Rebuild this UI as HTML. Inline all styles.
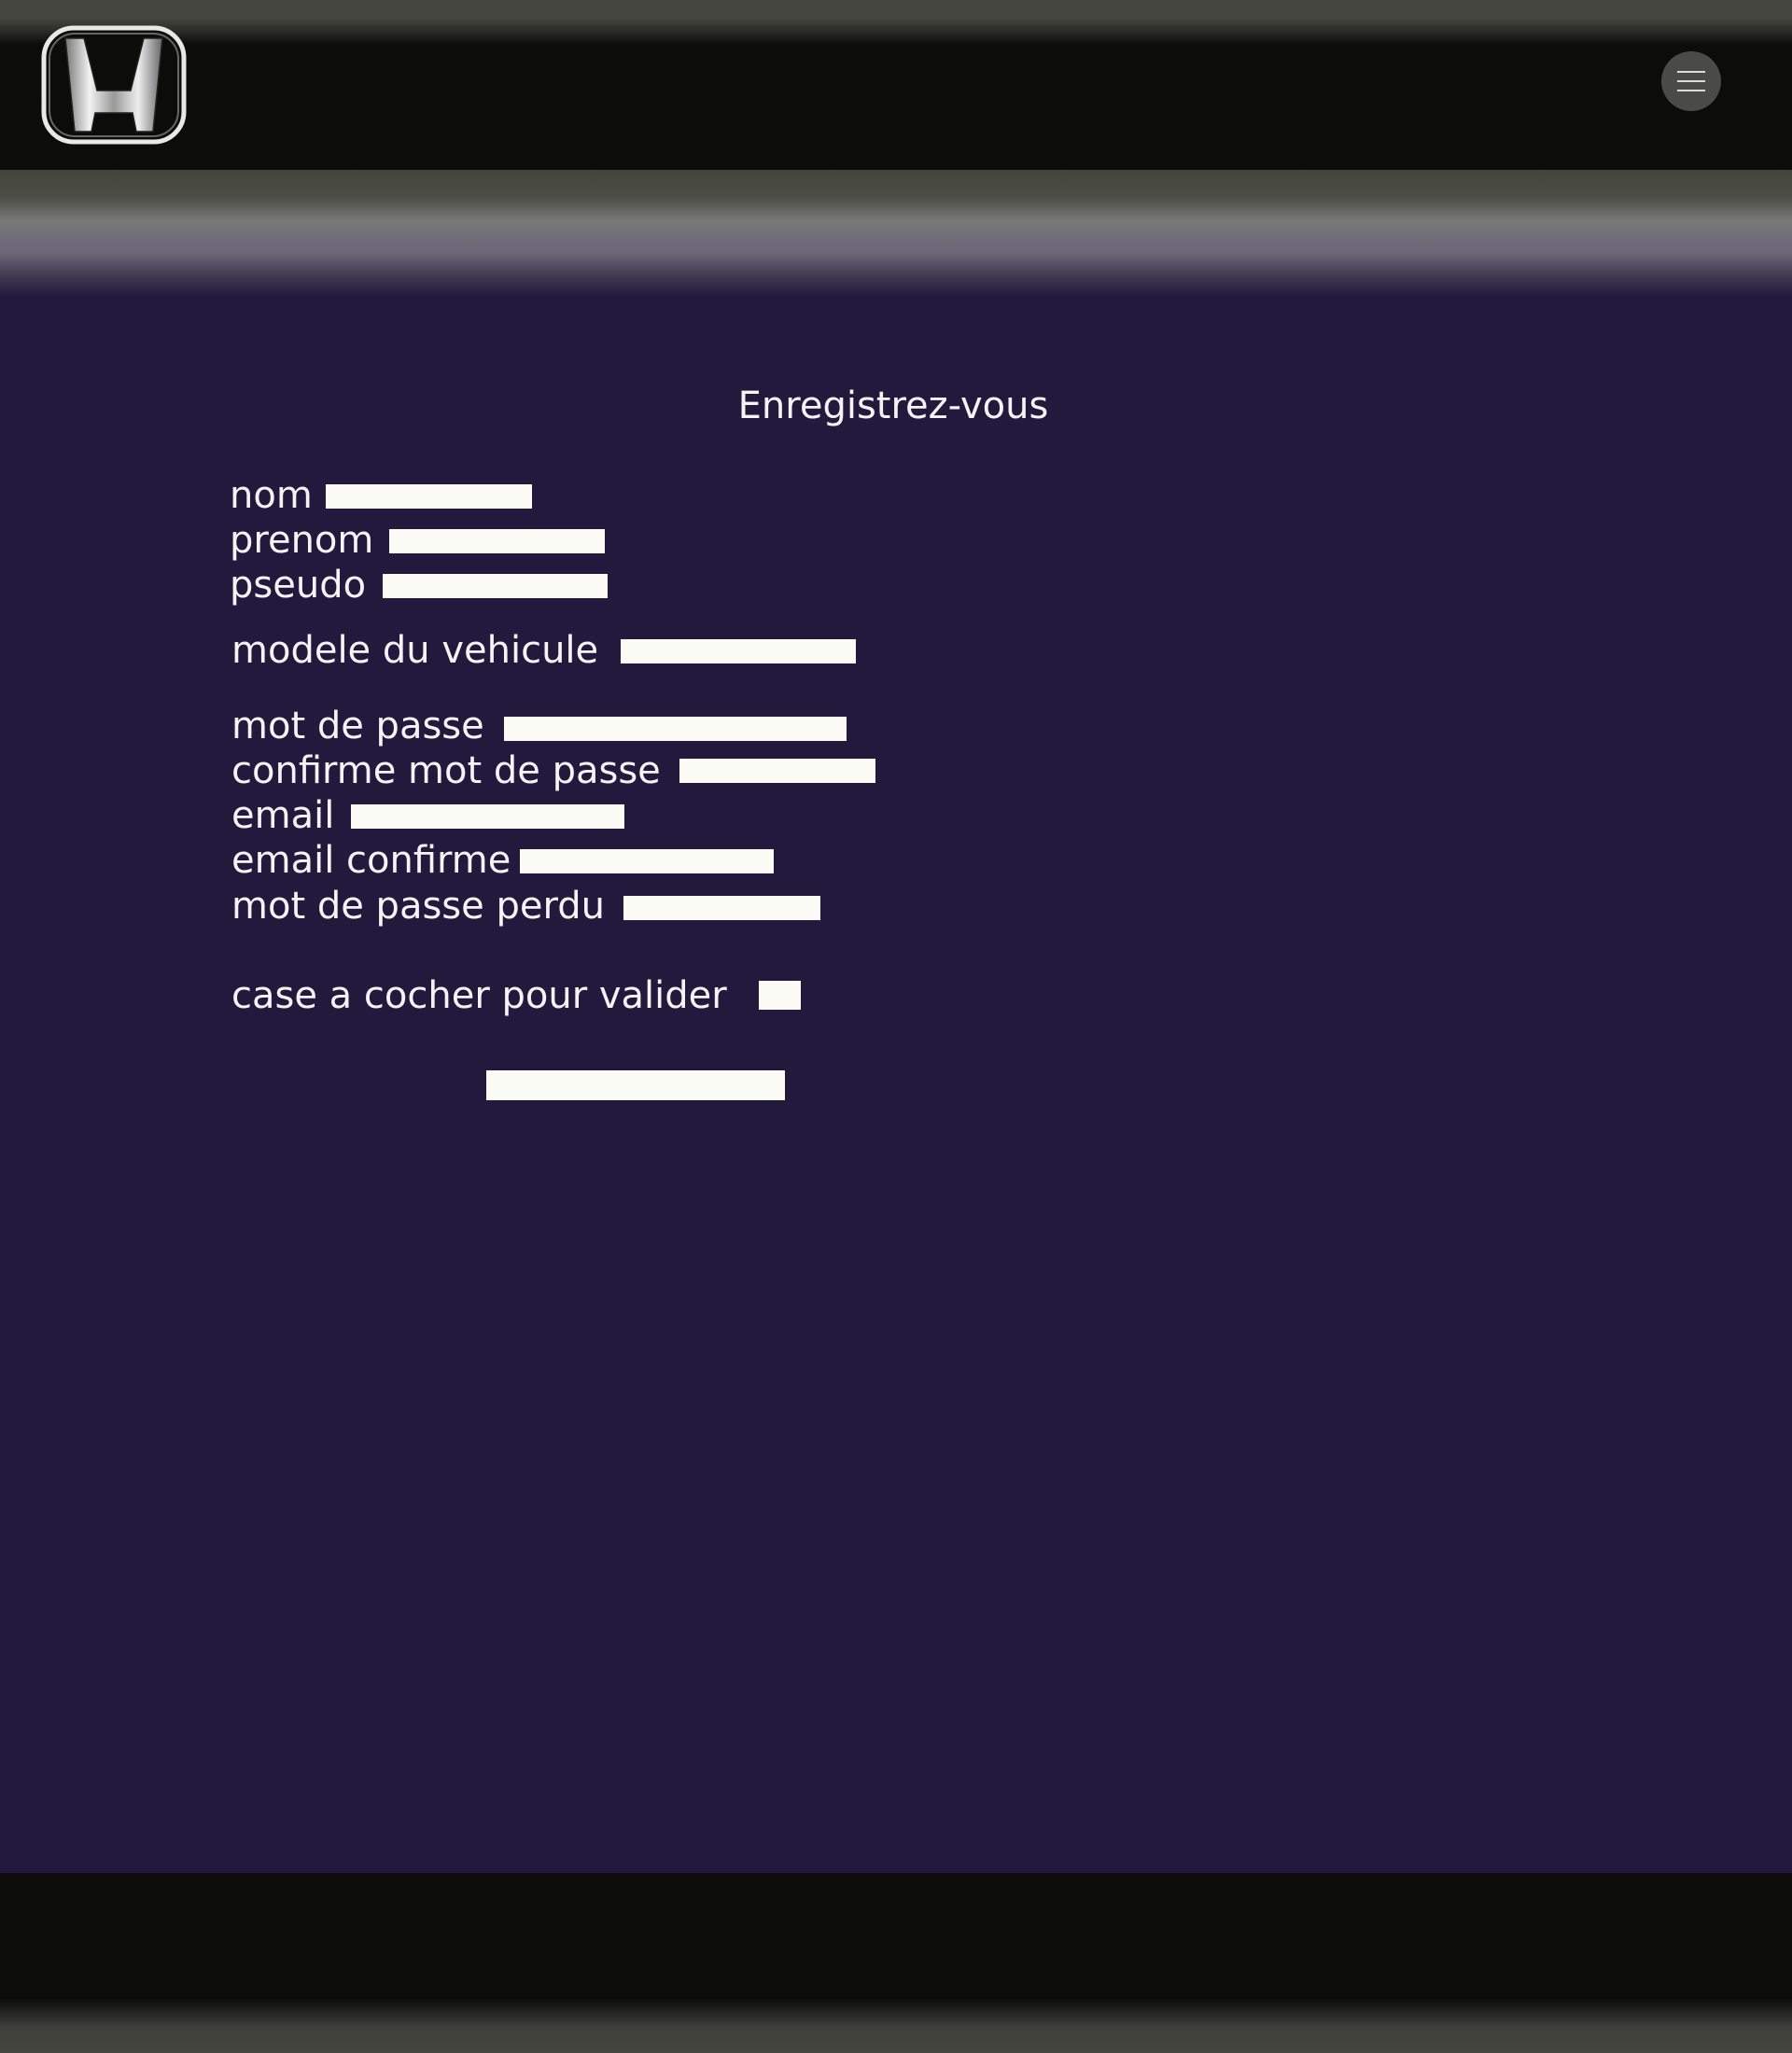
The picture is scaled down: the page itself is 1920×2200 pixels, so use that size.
<!DOCTYPE html>
<html><head><meta charset="utf-8"><style>
*{margin:0;padding:0;box-sizing:border-box}
body{width:1920px;height:2200px;background:#221a3d;position:relative;overflow:hidden;font-family:"DejaVu Sans","Liberation Sans",sans-serif;color:#f4f4f4}
.hdr{position:absolute;left:0;top:0;width:1920px;height:182px;background:linear-gradient(#45463f 0,#45463f 20px,#0c0c0b 48px,#0c0c0b 100%)}
.band{position:absolute;left:0;top:182px;width:1920px;height:136px;background:linear-gradient(#43443c 0,#4d4e47 30px,#7a7a76 55px,#716f78 70px,#6a6677 90px,#3d3750 115px,#221a3d 136px)}
.ftr{position:absolute;left:0;top:2007px;width:1920px;height:193px;background:linear-gradient(#0c0c0b 0,#0c0c0b 135px,#3e3f3a 165px,#45463f 100%)}
.t{position:absolute;font-size:40px;line-height:47px;white-space:nowrap}
.i{position:absolute;background:#fbfcf6}
.burger{position:absolute;left:1780px;top:55px;width:64px;height:64px;border-radius:50%;background:#4a4a48}
.burger i{position:absolute;left:17px;width:30px;height:2px;background:#ddd}
</style></head><body>
<div class="hdr"></div>
<div class="band"></div>
<svg style="position:absolute;left:44px;top:27px" width="156" height="130" viewBox="0 0 156 130">
<defs><linearGradient id="g" x1="0" x2="1"><stop offset="0" stop-color="#777"/><stop offset=".25" stop-color="#f2f2f2"/><stop offset=".5" stop-color="#999"/><stop offset=".75" stop-color="#eee"/><stop offset="1" stop-color="#666"/></linearGradient></defs>
<rect x="3" y="3" width="150" height="122" rx="32" fill="#0c0c0b" stroke="#e8e8e8" stroke-width="5"/>
<rect x="9" y="9" width="138" height="110" rx="27" fill="none" stroke="#666" stroke-width="2"/>
<path d="M26 14 L46 14 L60 70 L96 70 L110 14 L130 14 L120 114 L102 114 L98 94 L58 94 L54 114 L36 114 Z" fill="url(#g)" stroke="#222" stroke-width="1.5"/>
</svg>
<div class="burger"><i style="top:21px"></i><i style="top:31px"></i><i style="top:41px"></i></div>
<div class="t" style="left:0;width:1914px;text-align:center;top:412px">Enregistrez-vous</div>
<div class="t" style="left:246px;top:508px">nom</div><div class="i" style="left:349px;top:519px;width:221px;height:26px"></div>
<div class="t" style="left:246px;top:556px">prenom</div><div class="i" style="left:417px;top:567px;width:231px;height:26px"></div>
<div class="t" style="left:246px;top:604px">pseudo</div><div class="i" style="left:410px;top:615px;width:241px;height:26px"></div>
<div class="t" style="left:248px;top:674px">modele du vehicule</div><div class="i" style="left:665px;top:685px;width:252px;height:26px"></div>
<div class="t" style="left:248px;top:755px">mot de passe</div><div class="i" style="left:540px;top:768px;width:367px;height:26px"></div>
<div class="t" style="left:248px;top:803px">confirme mot de passe</div><div class="i" style="left:728px;top:813px;width:210px;height:26px"></div>
<div class="t" style="left:248px;top:851px">email</div><div class="i" style="left:376px;top:862px;width:293px;height:26px"></div>
<div class="t" style="left:248px;top:899px">email confirme</div><div class="i" style="left:557px;top:910px;width:272px;height:26px"></div>
<div class="t" style="left:248px;top:948px">mot de passe perdu</div><div class="i" style="left:668px;top:960px;width:211px;height:26px"></div>
<div class="t" style="left:248px;top:1044px">case a cocher pour valider</div><div class="i" style="left:813px;top:1051px;width:45px;height:31px"></div>
<div class="i" style="left:521px;top:1147px;width:320px;height:32px"></div>
<div class="ftr"></div>
</body></html>
